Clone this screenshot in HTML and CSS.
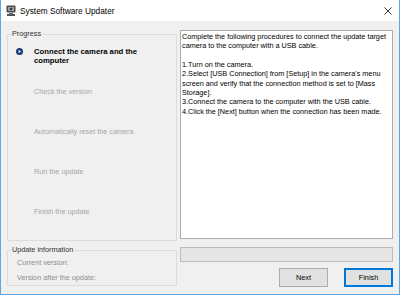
FILE: index.html
```html
<!DOCTYPE html>
<html>
<head>
<meta charset="utf-8">
<link rel="stylesheet" href="styles.css">
</head>
<body>
<div class="window">
  <div class="titlebar">
    <svg class="app-icon" width="10" height="11" viewBox="0 0 10 11">
      <rect x="0.5" y="0.5" width="9" height="7" rx="1" fill="#4b4b4b"/>
      <rect x="2" y="2" width="6" height="4" fill="#9aa4ad"/>
      <circle cx="5" cy="4" r="1.3" fill="#3a3a3a"/>
      <rect x="3" y="8" width="4" height="1" fill="#6a6a6a"/>
      <rect x="1" y="9" width="8" height="2" fill="#555"/>
    </svg>
    <span class="title">System Software Updater</span>
    <svg class="close" width="8" height="8" viewBox="0 0 8 8">
      <path d="M0.5 0.5 L7.5 7.5 M7.5 0.5 L0.5 7.5" stroke="#333" stroke-width="1" fill="none"/>
    </svg>
  </div>
  <div class="client">
    <div class="left">
      <div class="group progress">
        <div class="legend">Progress</div>
        <div class="steps">
          <div class="step current">
            <svg class="step-icon" width="7" height="7" viewBox="0 0 7 7">
              <circle cx="3.5" cy="3.5" r="3.5" fill="#1d3b78"/>
              <path d="M2.6 1.9 L5.1 3.5 L2.6 5.1 Z" fill="#fff"/>
            </svg>
            <div class="step-text">Connect the camera and the<br>computer</div>
          </div>
          <div class="step"><div class="step-text">Check the version</div></div>
          <div class="step"><div class="step-text">Automatically reset the camera</div></div>
          <div class="step"><div class="step-text">Run the update</div></div>
          <div class="step"><div class="step-text">Finish the update</div></div>
        </div>
      </div>
      <div class="group info">
        <div class="legend">Update information</div>
        <div class="info-rows">
          <div class="info-row">Current version:</div>
          <div class="info-row">Version after the update:</div>
        </div>
      </div>
    </div>
    <div class="right">
      <div class="textbox">Complete the following procedures to connect the update target<br>camera to the computer with a USB cable.<br><br>1.Turn on the camera.<br>2.Select [USB Connection] from [Setup] in the camera's menu<br>screen and verify that the connection method is set to [Mass<br>Storage].<br>3.Connect the camera to the computer with the USB cable.<br>4.Click the [Next] button when the connection has been made.</div>
      <div class="bar"></div>
      <div class="buttons">
        <button class="btn">Next</button>
        <button class="btn default">Finish</button>
      </div>
    </div>
  </div>
</div>
</body>
</html>
```
FILE: styles.css
```css
html, body {
  margin: 0;
  padding: 0;
  background: #f0f0f0;
}
body {
  font-family: "Liberation Sans", Arial, sans-serif;
  font-size: 7.25px;
}
.window {
  width: 400px;
  height: 295px;
  box-sizing: border-box;
  border: 1px solid #5fa6e4;
  border-top: 0;
  background: #f0f0f0;
  display: flex;
  flex-direction: column;
}
.titlebar {
  height: 21px;
  flex: none;
  background: #fff;
  display: flex;
  align-items: center;
}
.app-icon {
  margin-left: 5px;
  flex: none;
}
.title {
  margin-left: 4px;
  font-size: 8.3px;
  color: #000;
  flex: 1;
}
.close {
  margin-right: 7px;
  flex: none;
}
.client {
  flex: 1;
  display: grid;
  grid-template-columns: 170px 213px;
  column-gap: 3px;
  padding: 0 6px;
}
.left {
  display: flex;
  flex-direction: column;
}
.group {
  border: 1px solid #dcdcdc;
  box-sizing: border-box;
}
.legend {
  margin-top: -6px;
  margin-left: 3px;
  padding: 0 1px;
  width: fit-content;
  background: #f0f0f0;
  line-height: 10px;
  color: #333;
}
.progress {
  margin-top: 13px;
  height: 207px;
}
.steps {
  padding-top: 8px;
  display: grid;
  grid-auto-rows: 40px;
}
.step {
  display: grid;
  grid-template-columns: 26px 1fr;
  align-items: start;
}
.step-icon {
  margin-left: 8px;
  margin-top: 1px;
  grid-column: 1;
}
.step-text {
  grid-column: 2;
  line-height: 9.33px;
  color: #a6a6a6;
}
.step.current .step-text {
  color: #000;
  font-weight: bold;
  font-size: 7.7px;
}
.info {
  margin-top: 9px;
}
.info-rows {
  padding-left: 9px;
}
.info-row {
  line-height: 15px;
  color: #8e8e8e;
}
.right {
  display: flex;
  flex-direction: column;
}
.textbox {
  margin-top: 9px;
  height: 209px;
  box-sizing: border-box;
  border: 1px solid #abadb3;
  background: #fff;
  padding: 1px 1px;
  line-height: 9.33px;
  color: #000;
  white-space: nowrap;
  overflow: hidden;
}
.bar {
  margin-top: 8px;
  height: 15px;
  box-sizing: border-box;
  border: 1px solid #bcbcbc;
  background: #e6e6e6;
}
.buttons {
  margin-top: 6px;
  display: flex;
  justify-content: flex-end;
  gap: 16px;
}
.btn {
  width: 49px;
  height: 19px;
  box-sizing: border-box;
  margin: 0;
  padding: 0;
  border: 1px solid #adadad;
  background: #e1e1e1;
  font-family: "Liberation Sans", Arial, sans-serif;
  font-size: 7.25px;
  color: #000;
}
.btn.default {
  border-color: #0078d7;
  box-shadow: inset 0 0 0 1px #0078d7;
}
```
